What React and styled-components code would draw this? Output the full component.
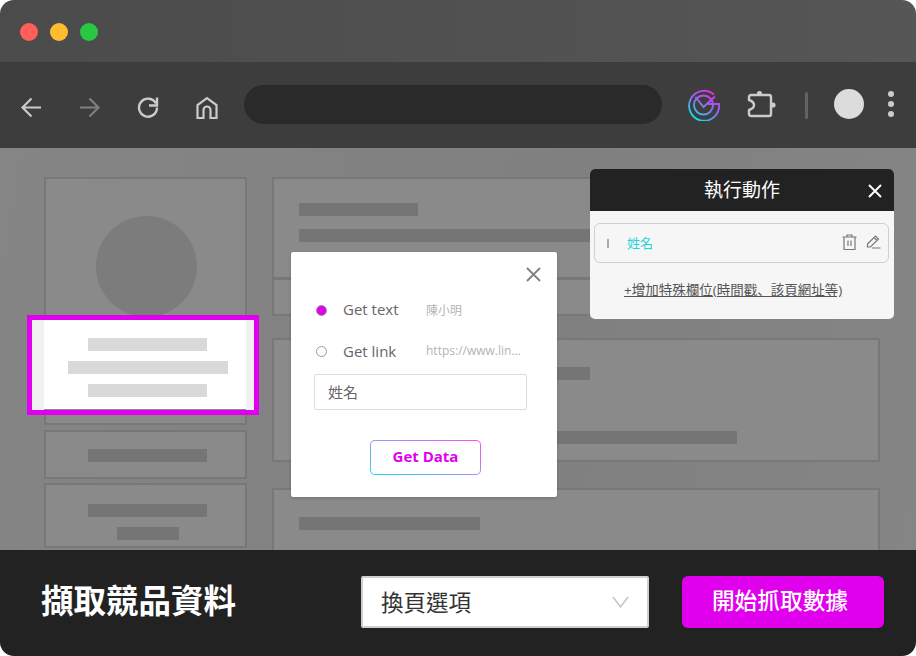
import React from 'react';
import styled, { createGlobalStyle } from 'styled-components';

const GlobalStyle = createGlobalStyle`
  html, body {
    margin: 0;
    padding: 0;
    background: #fff;
  }
  * {
    box-sizing: border-box;
  }
`;

const FONT = `"Open Sans", "Noto Sans CJK TC", sans-serif`;

const Window = styled.div`
  width: 916px;
  height: 656px;
  display: flex;
  flex-direction: column;
  border-radius: 14px;
  overflow: hidden;
  font-family: ${FONT};
`;

const TitleBar = styled.div`
  height: 62px;
  flex: none;
  display: flex;
  align-items: center;
  gap: 12px;
  padding: 1px 0 0 19.5px;
  background: linear-gradient(90deg, #4b4b4b, #565656);
`;

const Light = styled.span`
  width: 18px;
  height: 18px;
  border-radius: 50%;
  background: ${p => p.$color};
`;

const Toolbar = styled.div`
  height: 86px;
  flex: none;
  display: flex;
  align-items: center;
  background: #3d3d3d;
`;

const ToolIcon = styled.svg`
  flex: none;
  display: block;
  margin-left: ${p => p.$left}px;
  margin-top: ${p => p.$top || 0}px;
  fill: none;
  stroke: ${p => p.$dim ? '#7f7f7f' : '#cbcbcb'};
  stroke-width: ${p => p.$weight || 2.2};
`;

const BrandIcon = styled.svg`
  flex: none;
  display: block;
  margin-left: 25px;
  margin-top: -3px;
  fill: none;
  stroke-width: 1.9;
`;

const UrlBar = styled.div`
  width: 418px;
  height: 39px;
  flex: none;
  margin-left: 25px;
  margin-top: -1px;
  border-radius: 20px;
  background: #2a2a2a;
`;

const Divider = styled.div`
  width: 3px;
  height: 27px;
  flex: none;
  margin-left: 28px;
  margin-top: 1px;
  border-radius: 2px;
  background: #636363;
`;

const Avatar = styled.div`
  width: 30px;
  height: 30px;
  flex: none;
  margin-left: 26px;
  margin-top: -2px;
  border-radius: 50%;
  background: #dcdcdc;
`;

const Dots = styled.div`
  display: flex;
  flex-direction: column;
  gap: 4px;
  margin-left: 24px;
  margin-top: -3px;
  span {
    width: 6px;
    height: 6px;
    border-radius: 50%;
    background: #cbcbcb;
  }
`;

const Content = styled.div`
  position: relative;
  height: 402px;
  flex: none;
  display: flex;
  gap: 25px;
  padding: 29px 0 0 44px;
  overflow: hidden;
  background: linear-gradient(100deg, #858585, #808080 60%, #858585);
`;

const Column = styled.div`
  width: ${p => p.$width}px;
  flex: none;
  display: flex;
  flex-direction: column;
`;

const Card = styled.div`
  height: ${p => p.$height}px;
  flex: none;
  margin-top: ${p => p.$gap || 0}px;
  display: flex;
  flex-direction: column;
  align-items: ${p => p.$center ? 'center' : 'flex-start'};
  justify-content: ${p => p.$middle ? 'center' : 'flex-start'};
  padding: ${p => p.$pad || '0'};
  border: 2px solid #787878;
  background: #8a8a8a;
`;

const Bar = styled.div`
  width: ${p => p.$width}px;
  height: 13px;
  flex: none;
  margin-top: ${p => p.$gap || 0}px;
  background: ${p => p.$light ? '#d9d9d9' : '#757575'};
`;

const Portrait = styled.div`
  width: 101px;
  height: 101px;
  flex: none;
  margin-top: 37px;
  border-radius: 50%;
  background: #7c7c7c;
`;

const Highlight = styled.div`
  position: absolute;
  left: 27px;
  top: 167px;
  width: 232px;
  height: 100px;
  display: flex;
  padding: 0 8px 0 12px;
  border: 5px solid #e000ee;
  background: #f1f1f1;
`;

const HighlightInner = styled.div`
  flex: 1;
  display: flex;
  flex-direction: column;
  align-items: center;
  padding: 18px 0 0 5px;
  background: #fff;
  border-bottom: 1px solid #8a8a8a;
`;

const Popup = styled.div`
  position: absolute;
  left: 291px;
  top: 104px;
  width: 266px;
  height: 245px;
  display: flex;
  flex-direction: column;
  padding-top: 15px;
  border-radius: 2px;
  background: #fff;
  box-shadow: 0 1px 3px rgba(0, 0, 0, 0.18);
`;

const PopupClose = styled.svg`
  align-self: flex-end;
  margin-right: 16px;
  flex: none;
  stroke: #808080;
  stroke-width: 1.8;
  fill: none;
`;

const OptionRow = styled.div`
  height: 24px;
  flex: none;
  margin-top: ${p => p.$gap}px;
  display: flex;
  align-items: center;
  padding-left: 25px;
`;

const Radio = styled.span`
  width: 11px;
  height: 11px;
  flex: none;
  border-radius: 50%;
  border: 1px solid #9a9a9a;
  background: ${p => p.$on ? '#e000ee' : '#fff'};
`;

const OptionLabel = styled.span`
  width: 83px;
  flex: none;
  margin-left: 16px;
  padding-bottom: ${p => p.$lift}px;
  font-size: 15px;
  color: #666;
`;

const OptionValue = styled.span`
  padding-bottom: 1px;
  font-size: 12px;
  color: #b4b4b4;
  white-space: nowrap;
`;

const NameInput = styled.div`
  width: 213px;
  height: 36px;
  flex: none;
  margin: 11px 0 0 23px;
  display: flex;
  align-items: center;
  padding: 0 0 2px 13px;
  border: 1px solid #dcdcdc;
  border-radius: 2px;
  font-size: 15px;
  color: #666;
`;

const GetData = styled.div`
  width: 111px;
  height: 35px;
  flex: none;
  margin: 30px 0 0 79px;
  display: flex;
  align-items: center;
  justify-content: center;
  padding-bottom: 4px;
  border: 1px solid transparent;
  border-radius: 5px;
  background:
    linear-gradient(#fff, #fff) padding-box,
    linear-gradient(20deg, #1fdcea, #a98bff 55%, #ff4df0) border-box;
  font-size: 15px;
  font-weight: 700;
  color: #e000ee;
`;

const ActionPanel = styled.div`
  position: absolute;
  left: 590px;
  top: 21px;
  width: 304px;
  height: 150px;
  display: flex;
  flex-direction: column;
  border-radius: 5px;
  overflow: hidden;
  background: #f6f6f6;
`;

const PanelHeader = styled.div`
  position: relative;
  height: 42px;
  flex: none;
  display: flex;
  align-items: center;
  justify-content: center;
  padding-bottom: 2px;
  background: #222;
  font-size: 19px;
  color: #fff;
`;

const PanelClose = styled.svg`
  position: absolute;
  right: 12px;
  top: 15px;
  stroke: #fff;
  stroke-width: 2;
  fill: none;
`;

const FieldRow = styled.div`
  width: 295px;
  height: 40px;
  flex: none;
  margin: 12px 0 0 4px;
  display: flex;
  align-items: center;
  padding-left: 12px;
  border: 1px solid #cfcfcf;
  border-radius: 6px;
`;

const Handle = styled.span`
  width: 2px;
  height: 9px;
  flex: none;
  background: #aaa;
`;

const FieldName = styled.span`
  margin-left: 18px;
  flex: 1;
  padding-bottom: 2px;
  font-size: 13px;
  color: #2bd3d8;
`;

const RowIcon = styled.svg`
  flex: none;
  margin-right: ${p => p.$right}px;
  margin-top: -2px;
  fill: none;
  stroke: #777;
  stroke-width: 1.2;
`;

const AddField = styled.span`
  align-self: flex-start;
  margin: 18px 0 0 34px;
  font-family: "Open Sans", "Noto Sans CJK JP", sans-serif;
  font-size: 13.5px;
  line-height: 18px;
  color: #555;
  text-decoration: underline;
  white-space: nowrap;
`;

const Footer = styled.div`
  flex: 1;
  display: flex;
  align-items: center;
  padding: 0 32px 2px 41px;
  background: #222;
`;

const FooterTitle = styled.div`
  width: 320px;
  flex: none;
  padding-bottom: 6px;
  font-size: 32.5px;
  font-weight: 700;
  color: #fff;
  white-space: nowrap;
`;

const PageSelect = styled.div`
  width: 288px;
  height: 52px;
  flex: none;
  display: flex;
  align-items: center;
  justify-content: space-between;
  padding: 0 18px 2px 18px;
  border: 2px solid #cfcfcf;
  border-radius: 2px;
  background: #fff;
  font-size: 22.5px;
  color: #333;
`;

const Chevron = styled.svg`
  margin-top: 2px;
  fill: none;
  stroke: #c4c4c4;
  stroke-width: 1.5;
`;

const StartButton = styled.div`
  width: 202px;
  height: 52px;
  flex: none;
  margin-left: 33px;
  display: flex;
  align-items: center;
  justify-content: center;
  padding: 0 6px 5px 0;
  border-radius: 6px;
  background: #e000ee;
  font-size: 22.7px;
  font-weight: 500;
  color: #fff;
`;

function BrandLogo() {
  return (
    <BrandIcon width="34" height="34" viewBox="0 0 34 34">
      <defs>
        <linearGradient id="brand" gradientUnits="userSpaceOnUse" x1="26" y1="3" x2="8" y2="31">
          <stop offset="0" stopColor="#f01fe6" />
          <stop offset="0.5" stopColor="#8f6cf0" />
          <stop offset="1" stopColor="#10dbe8" />
        </linearGradient>
      </defs>
      {/* G ring with the clock face and tick inside it */}
      <g stroke="url(#brand)">
        <path d="M27 7.5 A15 15 0 1 0 32 17 H21" />
        <circle cx="16.5" cy="18" r="9.5" />
        <path d="M8.5 10 L16.5 20 L28 9.5" />
      </g>
    </BrandIcon>
  );
}

function Puzzle() {
  return (
    <ToolIcon $left={24} $top={-1} $weight={2.4} width="32" height="30" viewBox="0 0 32 30">
      <path d="M6 5 H24 a2 2 0 0 1 2 2 V24 a2 2 0 0 1 -2 2 H6 a2 2 0 0 1 -2 -2 V20 C7 19 9 17.5 9 15 S7 11 4 10 V7 a2 2 0 0 1 2 -2 Z" strokeLinejoin="round" />
      <circle cx="14.5" cy="3.5" r="2.6" fill="#cbcbcb" stroke="none" />
      <circle cx="28" cy="15" r="2.6" fill="#cbcbcb" stroke="none" />
    </ToolIcon>
  );
}

function App() {
  return (
    <Window>
      <GlobalStyle />
      <TitleBar>
        <Light $color="#ff5f57" />
        <Light $color="#ffbd2e" />
        <Light $color="#28c940" />
      </TitleBar>

      <Toolbar>
        <ToolIcon $left={21} $top={4} width="21" height="21" viewBox="0 0 21 21">
          <path d="M20 10.5 H2 M10.5 1.5 L1.5 10.5 L10.5 19.5" />
        </ToolIcon>
        <ToolIcon $dim $left={37} $top={4} width="21" height="21" viewBox="0 0 21 21">
          <path d="M1 10.5 H19 M10.5 1.5 L19.5 10.5 L10.5 19.5" />
        </ToolIcon>
        <ToolIcon $left={36} $top={4} $weight={2.4} width="24" height="24" viewBox="0 0 24 24">
          <path d="M20 8.5 A9 9 0 1 0 21 12.5" />
          <path d="M21 2.5 V10.5 H13" />
        </ToolIcon>
        <ToolIcon $left={35} $top={4} width="24" height="25" viewBox="0 0 24 25">
          <path d="M2.5 23 V10 L12 3 L21.5 10 V23 H15.5 V15 a3.5 3.5 0 0 0 -7 0 V23 Z" />
        </ToolIcon>
        <UrlBar />
        <BrandLogo />
        <Puzzle />
        <Divider />
        <Avatar />
        <Dots>
          <span />
          <span />
          <span />
        </Dots>
      </Toolbar>

      <Content>
        <Column $width={203}>
          <Card $height={248} $center $pad="0 0 0 2px">
            <Portrait />
          </Card>
          <Card $height={49} $gap={5} $center $middle $pad="2px 0 0 4px">
            <Bar $width={119} />
          </Card>
          <Card $height={65} $gap={4} $center $pad="19px 0 0 4px">
            <Bar $width={119} />
            <Bar $width={62} $gap={10} />
          </Card>
        </Column>

        <Column $width={608}>
          <Card $height={102} $pad="24px 0 0 25px">
            <Bar $width={119} />
            <Bar $width={400} $gap={13} />
          </Card>
          <Card $height={38} $gap={-1} />
          <Card $height={124} $gap={22} $pad="27px 0 0 25px">
            <Bar $width={291} />
            <Bar $width={438} $gap={51} />
          </Card>
          <Card $height={80} $gap={26} $pad="27px 0 0 25px">
            <Bar $width={181} />
          </Card>
        </Column>

        <Highlight>
          <HighlightInner>
            <Bar $width={119} $light />
            <Bar $width={160} $gap={10} $light />
            <Bar $width={119} $gap={10} $light />
          </HighlightInner>
        </Highlight>

        <Popup>
          <PopupClose width="15" height="15" viewBox="0 0 15 15">
            <path d="M1 1 L14 14 M14 1 L1 14" />
          </PopupClose>
          <OptionRow $gap={16}>
            <Radio $on />
            <OptionLabel $lift={2}>Get text</OptionLabel>
            <OptionValue>陳小明</OptionValue>
          </OptionRow>
          <OptionRow $gap={17}>
            <Radio />
            <OptionLabel $lift={0}>Get link</OptionLabel>
            <OptionValue>https://www.lin...</OptionValue>
          </OptionRow>
          <NameInput>姓名</NameInput>
          <GetData>Get Data</GetData>
        </Popup>

        <ActionPanel>
          <PanelHeader>
            執行動作
            <PanelClose width="14" height="14" viewBox="0 0 14 14">
              <path d="M1 1 L13 13 M13 1 L1 13" />
            </PanelClose>
          </PanelHeader>
          <FieldRow>
            <Handle />
            <FieldName>姓名</FieldName>
            <RowIcon $right={9} width="15" height="16" viewBox="0 0 15 16">
              <path d="M0.5 3 H14.5 M5 3 V1 H10 V3 M2 3 V15.5 H13 V3 M6 6.5 V12 M9 6.5 V12" />
            </RowIcon>
            <RowIcon $right={7} width="15" height="14" viewBox="0 0 15 14">
              <path d="M1.5 9 L9.5 1 L12.5 4 L4.5 12 H1.5 Z M8 2.5 L11 5.5 M6 13 H14.5" />
            </RowIcon>
          </FieldRow>
          <AddField>+增加特殊欄位(時間戳、該頁網址等)</AddField>
        </ActionPanel>
      </Content>

      <Footer>
        <FooterTitle>擷取競品資料</FooterTitle>
        <PageSelect>
          換頁選項
          <Chevron width="17" height="12" viewBox="0 0 17 12">
            <path d="M1 1 L8.5 11 L16 1" />
          </Chevron>
        </PageSelect>
        <StartButton>開始抓取數據</StartButton>
      </Footer>
    </Window>
  );
}

export default App;
